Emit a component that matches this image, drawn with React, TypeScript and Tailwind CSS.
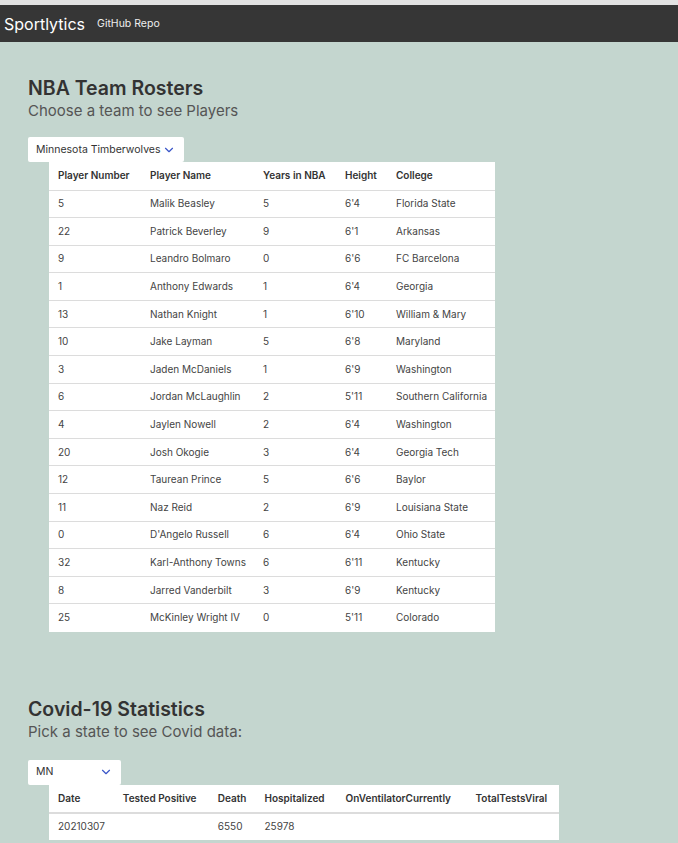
import { ChevronDown } from "lucide-react";

const players = [
  ["5", "Malik Beasley", "5", "6'4", "Florida State"],
  ["22", "Patrick Beverley", "9", "6'1", "Arkansas"],
  ["9", "Leandro Bolmaro", "0", "6'6", "FC Barcelona"],
  ["1", "Anthony Edwards", "1", "6'4", "Georgia"],
  ["13", "Nathan Knight", "1", "6'10", "William & Mary"],
  ["10", "Jake Layman", "5", "6'8", "Maryland"],
  ["3", "Jaden McDaniels", "1", "6'9", "Washington"],
  ["6", "Jordan McLaughlin", "2", "5'11", "Southern California"],
  ["4", "Jaylen Nowell", "2", "6'4", "Washington"],
  ["20", "Josh Okogie", "3", "6'4", "Georgia Tech"],
  ["12", "Taurean Prince", "5", "6'6", "Baylor"],
  ["11", "Naz Reid", "2", "6'9", "Louisiana State"],
  ["0", "D'Angelo Russell", "6", "6'4", "Ohio State"],
  ["32", "Karl-Anthony Towns", "6", "6'11", "Kentucky"],
  ["8", "Jarred Vanderbilt", "3", "6'9", "Kentucky"],
  ["25", "McKinley Wright IV", "0", "5'11", "Colorado"],
];

const rosterCols = [
  { name: "Player Number", w: "w-[92px]" },
  { name: "Player Name", w: "w-[113px]" },
  { name: "Years in NBA", w: "w-[82px]" },
  { name: "Height", w: "w-[51px]" },
  { name: "College", w: "w-[108px]" },
];

const covidCols = [
  { name: "Date", w: "w-[64px]" },
  { name: "Tested Positive", w: "w-[95px]" },
  { name: "Death", w: "w-[46px]" },
  { name: "Hospitalized", w: "w-[81px]" },
  { name: "OnVentilatorCurrently", w: "w-[130px]" },
  { name: "TotalTestsViral", w: "w-[92px]" },
];

function Select({ label, width }: { label: string; width: string }) {
  return (
    <div className={`${width} h-[25px] bg-white rounded-[2px] flex items-center justify-between pl-[8px] pr-[8px] text-[10.5px] text-[#333]`}>
      <span>{label}</span>
      <ChevronDown className="w-3.5 h-3.5 text-[#3a56c8]" strokeWidth={2} />
    </div>
  );
}

export default function App() {
  return (
    <div className="min-h-[843px] bg-[#c4d6cf] font-['Inter',sans-serif] text-[#333]">
      <div className="h-[5px] bg-[#e2e2e2]" />
      <nav className="h-[37px] bg-[#363636] flex items-center px-[4px] gap-[12px]">
        <span className="text-[16px] text-white">Sportlytics</span>
        <span className="text-[10.5px] text-[#eee]">GitHub Repo</span>
      </nav>

      <section className="pl-[28px] pt-[33px]">
        <h1 className="text-[19.5px] font-semibold leading-[26px] text-[#333]">NBA Team Rosters</h1>
        <p className="text-[15px] leading-[20px] text-[#555]">Choose a team to see Players</p>
        <div className="mt-[16px]">
          <Select label="Minnesota Timberwolves" width="w-[156px]" />
        </div>
        <table className="ml-[21px] bg-white table-fixed border-collapse text-[10px] whitespace-nowrap">
          <thead>
            <tr>
              {rosterCols.map((c) => (
                <th key={c.name} className={`${c.w} h-[28px] px-[9px] text-left font-semibold text-[#333] border-b border-[#dcdcdc]`}>
                  {c.name}
                </th>
              ))}
            </tr>
          </thead>
          <tbody>
            {players.map((p, i) => (
              <tr key={i} className="border-b border-[#dcdcdc] last:border-b-0">
                {p.map((v, j) => (
                  <td key={j} className="h-[27.6px] pl-[9px] pr-[4px] text-[#444]">{v}</td>
                ))}
              </tr>
            ))}
          </tbody>
        </table>
      </section>

      <section className="pl-[28px] pt-[64px] pb-[3px]">
        <h1 className="text-[19.5px] font-semibold leading-[26px] text-[#333]">Covid-19 Statistics</h1>
        <p className="text-[15px] leading-[20px] text-[#555]">Pick a state to see Covid data:</p>
        <div className="mt-[18px]">
          <Select label="MN" width="w-[93px]" />
        </div>
        <table className="ml-[21px] bg-white table-fixed border-collapse text-[10px] whitespace-nowrap">
          <thead>
            <tr>
              {covidCols.map((c) => (
                <th key={c.name} className={`${c.w} h-[28px] px-[9px] text-left font-semibold text-[#333] border-b-2 border-[#dcdcdc]`}>
                  {c.name}
                </th>
              ))}
            </tr>
          </thead>
          <tbody>
            <tr>
              {["20210307", "", "6550", "25978", "", ""].map((v, j) => (
                <td key={j} className="h-[27px] px-[9px] text-[#444]">{v}</td>
              ))}
            </tr>
          </tbody>
        </table>
      </section>
    </div>
  );
}
